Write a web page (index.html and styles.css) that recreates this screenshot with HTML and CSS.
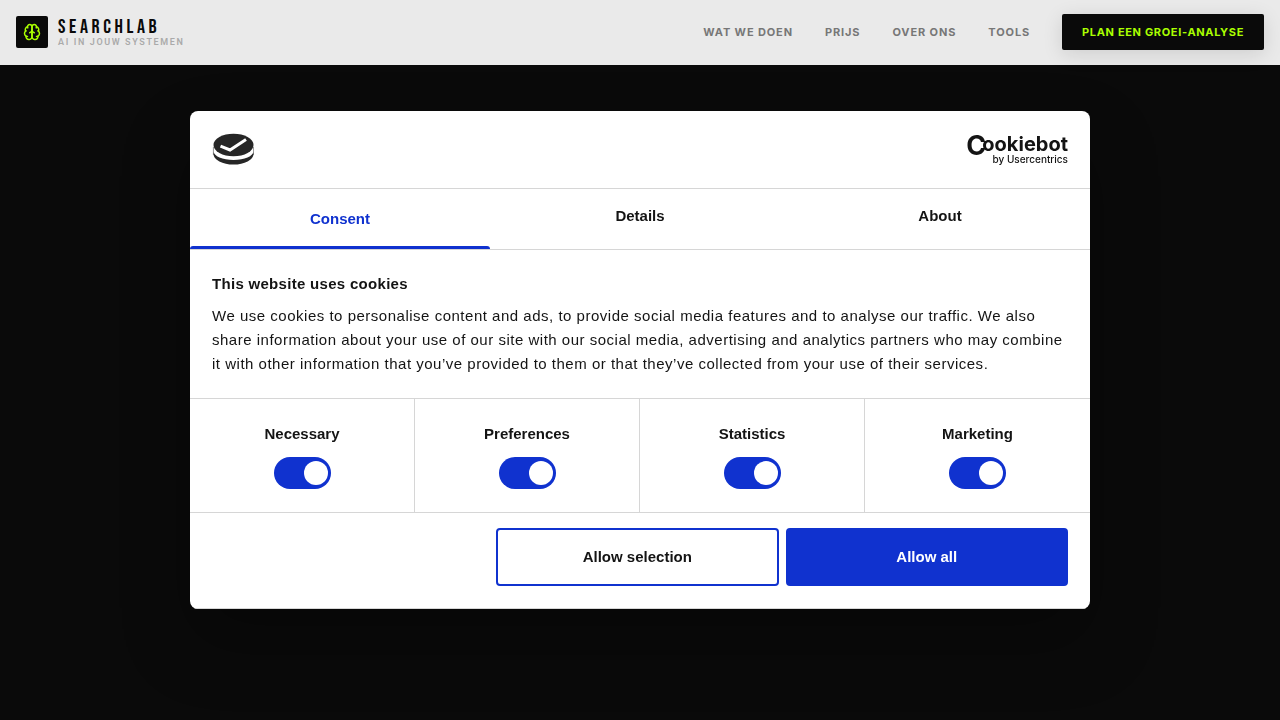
FILE: index.html
```html
<!DOCTYPE html>
<html lang="nl">
<head>
    <meta charset="UTF-8">
    <meta name="viewport" content="width=device-width, initial-scale=1">
    <title>Searchlab</title>
    <link rel="stylesheet" href="styles.css">
</head>
<body>
    <header class="header">
        <a class="brand" href="#">
            <span class="brand-icon">
                <svg viewBox="0 0 24 24" width="18" height="18" fill="none" stroke="currentColor" stroke-width="2" stroke-linecap="round" stroke-linejoin="round" aria-hidden="true">
                    <path d="M12 5a3 3 0 1 0-5.997.125 4 4 0 0 0-2.526 5.770 4 4 0 0 0 .556 6.588A4 4 0 1 0 12 18Z"/>
                    <path d="M12 5a3 3 0 1 1 5.997.125 4 4 0 0 1 2.526 5.770 4 4 0 0 1-.556 6.588A4 4 0 1 1 12 18Z"/>
                    <path d="M15 13a4.500 4.500 0 0 1-3-4 4.500 4.500 0 0 1-3 4"/>
                    <path d="M17.599 6.500a3 3 0 0 0 .399-1.375M6.003 5.125A3 3 0 0 0 6.401 6.500M3.477 10.896a4 4 0 0 1 .585-.396M19.938 10.500a4 4 0 0 1 .585.396M6 18a4 4 0 0 1-1.967-.516M19.967 17.484A4 4 0 0 1 18 18"/>
                </svg>
            </span>
            <span class="brand-text">
                <span class="brand-name">SEARCHLAB</span>
                <span class="brand-sub">AI IN JOUW SYSTEMEN</span>
            </span>
        </a>
        <nav class="nav">
            <a href="#">WAT WE DOEN</a>
            <a href="#">PRIJS</a>
            <a href="#">OVER ONS</a>
            <a href="#">TOOLS</a>
            <a class="cta" href="#">PLAN EEN GROEI-ANALYSE</a>
        </nav>
    </header>

    <div class="overlay">
        <div class="dialog" role="dialog" aria-labelledby="title">
            <div class="dialog-head">
                <svg class="cookie" viewBox="0 0 42 32" width="42" height="32" aria-hidden="true">
                    <ellipse cx="21.500" cy="21" rx="20" ry="10.500" fill="#262626"/>
                    <path d="M1 12v5.500c1 6 9.500 9.500 20.500 9.500s19.500-3.500 20.500-9.500v-5.500z" fill="#fff"/>
                    <ellipse cx="21.500" cy="12" rx="20" ry="11.300" fill="#262626"/>
                    <path d="M1.400 14v8M41.600 14v8" stroke="#262626" stroke-width="0.500"/>
                    <path d="M8.500 13.200l9.500 3.800 16-10.500" fill="none" stroke="#fff" stroke-width="3"/>
                </svg>
                <a class="cookiebot" href="#">
                    <span class="logo-word"><span class="logo-c">C</span>ookiebot</span>
                    <span class="logo-by">by Usercentrics</span>
                </a>
            </div>

            <div class="tabs" role="tablist">
                <button class="tab active" type="button" role="tab" aria-selected="true">Consent</button>
                <button class="tab" type="button" role="tab">Details</button>
                <button class="tab" type="button" role="tab">About</button>
            </div>

            <div class="content">
                <h2 id="title">This website uses cookies</h2>
                <p>We use cookies to personalise content and ads, to provide social media features and to analyse our traffic. We also share information about your use of our site with our social media, advertising and analytics partners who may combine it with other information that you’ve provided to them or that they’ve collected from your use of their services.</p>
            </div>

            <div class="types">
                <label class="type">Necessary<input class="switch" type="checkbox" checked></label>
                <label class="type">Preferences<input class="switch" type="checkbox" checked></label>
                <label class="type">Statistics<input class="switch" type="checkbox" checked></label>
                <label class="type">Marketing<input class="switch" type="checkbox" checked></label>
            </div>

            <div class="actions">
                <button class="btn" type="button">Allow selection</button>
                <button class="btn primary" type="button">Allow all</button>
            </div>
        </div>
    </div>
</body>
</html>
```

FILE: styles.css
```css
*{
    box-sizing:border-box;
    margin:0;
    padding:0;
}
body{
    min-height:100vh;
    background:#0a0a0a;
    color:#141414;
    font-family:"Liberation Sans", Helvetica, Arial, sans-serif;
}
a{
    color:inherit;
    text-decoration:none;
}

/* header */
.header{
    display:flex;
    justify-content:space-between;
    align-items:center;
    height:65px;
    padding:0 16px 1px;
    background:#eaeaea;
    font-family:Inter, sans-serif;
}
.brand{
    display:flex;
    align-items:center;
    gap:10px;
}
.brand-icon{
    display:flex;
    justify-content:center;
    align-items:center;
    width:32px;
    height:32px;
    border-radius:2px;
    background:#0a0a0a;
    color:#af0;
}
.brand-text{
    display:flex;
    flex-direction:column;
}
.brand-name{
    font-family:"Bebas Neue", "Roboto Condensed", Roboto, sans-serif;
    font-size:20px;
    font-weight:400;
    line-height:20px;
    letter-spacing:0.18em;
    color:#0a0a0a;
}
.brand-sub{
    font-family:Roboto, sans-serif;
    font-size:9px;
    font-weight:600;
    line-height:10px;
    letter-spacing:0.18em;
    color:#aaa;
}
.nav{
    display:flex;
    align-items:center;
    gap:32px;
    font-size:11px;
    font-weight:700;
    letter-spacing:0.08em;
    color:#777;
}
.cta{
    padding:0 20px;
    border-radius:2px;
    background:#0a0a0a;
    color:#af0;
    line-height:36px;
    letter-spacing:0.06em;
    box-shadow:0 4px 20px rgba(0,0,0,0.12);
}

/* cookie dialog */
.overlay{
    position:fixed;
    inset:0;
    display:flex;
    justify-content:center;
    align-items:center;
    pointer-events:none;
}
.dialog{
    width:900px;
    max-width:94%;
    border-radius:8px;
    background:#fff;
    box-shadow:0 32px 68px rgba(0,0,0,0.3);
    font-size:15px;
    line-height:24px;
    overflow:hidden;
    pointer-events:auto;
}
.dialog-head{
    display:flex;
    justify-content:space-between;
    align-items:flex-start;
    height:78px;
    padding:22px;
    border-bottom:1px solid #d6d6d6;
}
.dialog-head svg{
    display:block;
}
.cookiebot{
    display:flex;
    flex-direction:column;
    align-items:flex-end;
    font-family:Inter, sans-serif;
}
.logo-word{
    height:20px;
    font-size:20px;
    font-weight:700;
    line-height:22px;
}
.logo-c{
    margin-right:-4px;
    font-size:27px;
    line-height:1px;
    vertical-align:-4px;
}
.logo-by{
    font-size:10px;
    font-weight:500;
    line-height:12px;
}
.tabs{
    display:flex;
    border-bottom:1px solid #d6d6d6;
}
.tab{
    position:relative;
    flex:1;
    height:60px;
    padding-bottom:7px;
    border:0;
    background:transparent;
    color:#141414;
    font:inherit;
    font-weight:700;
}
.tab.active{
    padding-bottom:1px;
    color:#1032cf;
}
.tab.active::after{
    content:"";
    position:absolute;
    left:0;
    right:0;
    bottom:0;
    height:3px;
    border-radius:4px 4px 0 0;
    background:#1032cf;
}
.content{
    padding:22px;
}
.content h2{
    margin-bottom:8px;
    font-size:15px;
    letter-spacing:0.02em;
}
.content p{
    letter-spacing:0.034em;
}
.types{
    display:grid;
    grid-template-columns:repeat(4,1fr);
    border-top:1px solid #d6d6d6;
    border-bottom:1px solid #d6d6d6;
}
.type{
    display:flex;
    flex-direction:column;
    align-items:center;
    gap:11px;
    padding:23px 0;
    border-right:1px solid #d6d6d6;
    font-weight:700;
}
.type:last-child{
    border-right:0;
}
.switch{
    appearance:none;
    display:flex;
    justify-content:flex-end;
    align-items:center;
    width:57px;
    height:32px;
    padding:0 3px;
    border-radius:16px;
    background:#1032cf;
}
.switch::before{
    content:"";
    width:24px;
    height:24px;
    border-radius:50%;
    background:#fff;
}
.actions{
    display:flex;
    justify-content:flex-end;
    gap:7px;
    padding:15px 22px 22px;
    border-bottom:1px solid #d6d6d6;
}
.btn{
    width:33%;
    height:58px;
    padding-bottom:1px;
    border:2px solid #1032cf;
    border-radius:4px;
    background:#fff;
    color:#141414;
    font:inherit;
    font-weight:700;
}
.btn.primary{
    background:#1032cf;
    color:#fff;
}
```
